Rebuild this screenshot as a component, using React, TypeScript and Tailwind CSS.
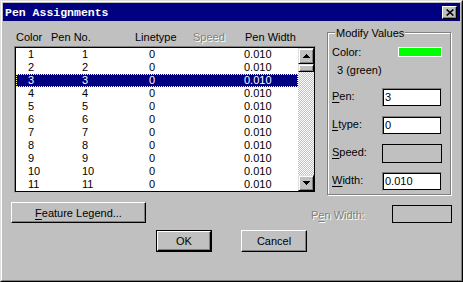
import React from "react";

const Arrow = ({ down }: { down?: boolean }) => (
  <svg width="7" height="4" viewBox="0 0 7 4" className={down ? "rotate-180" : ""}>
    <path d="M3 0h1v1h1v1h1v1h1v1H0V3h1V2h1V1h1z" fill="#000" />
  </svg>
);

const ScrollBtn = ({ down }: { down?: boolean }) => (
  <div className="w-[16px] h-[16px] shrink-0 bg-[#c0c0c0] border border-t-[#dfdfdf] border-l-[#dfdfdf] border-r-black border-b-black shadow-[inset_1px_1px_0_#fff,inset_-1px_-1px_0_#808080] flex items-center justify-center">
    <Arrow down={down} />
  </div>
);

const Field = ({ label, u, rest, value, disabled }: { label: string; u: string; rest: string; value?: string; disabled?: boolean }) => (
  <div className="flex items-start">
    <span className="w-[50px] mt-[2px]">
      <span className="underline underline-offset-2">{u}</span>
      {rest}
    </span>
    {disabled ? (
      <div className="w-[60px] h-[19px] border border-black bg-[#c0c0c0]" />
    ) : (
      <div className="w-[60px] h-[19px] border border-t-[#808080] border-l-[#808080] border-r-[#c0c0c0] border-b-[#c0c0c0]">
        <div className="w-full h-full border border-black bg-white pl-[1px] flex items-center">{value}</div>
      </div>
    )}
  </div>
);

export default function App() {
  const rows = Array.from({ length: 11 }, (_, i) => i + 1);
  return (
    <div className="w-[463px] h-[282px] bg-[#c0c0c0] border border-t-[#dfdfdf] border-l-[#dfdfdf] border-r-black border-b-black text-[11px] leading-[13px] text-black font-['Liberation_Sans',Arial,sans-serif] overflow-hidden">
      <div className="h-full border border-t-white border-l-white border-r-[#808080] border-b-[#808080] p-px flex flex-col">
        {/* Title bar */}
        <div className="h-[18px] shrink-0 bg-[#000080] flex items-center justify-between pl-[2px] pr-[3px]">
          <span className="text-white font-bold font-['Liberation_Mono',monospace] text-[11.5px] leading-[13px]">Pen Assignments</span>
          <div className="w-[15px] h-[13px] bg-[#c0c0c0] border border-t-white border-l-white border-r-black border-b-black shadow-[inset_-1px_-1px_0_#808080] flex items-center justify-center">
            <svg width="8" height="7" viewBox="0 0 8 7">
              <path d="M0.6 0.5L7.4 6.5M7.4 0.5L0.6 6.5" stroke="#000" strokeWidth="1.6" />
            </svg>
          </div>
        </div>

        {/* Top section */}
        <div className="flex items-start mt-[6px]">
          <div className="ml-[8px] w-[305px]">
            <div className="mt-[4px] pl-[5px] flex h-[13px]">
              <span className="w-[35px]">Color</span>
              <span className="w-[84px]">Pen No.</span>
              <span className="w-[58px]">Linetype</span>
              <span className="w-[52px] text-[#808080] [text-shadow:1px_1px_0_#fff]">Speed</span>
              <span>Pen Width</span>
            </div>
            <div className="mt-[2px] ml-[3px] w-[302px] h-[147px] border border-t-[#808080] border-l-[#808080] border-r-[#c0c0c0] border-b-[#c0c0c0]">
              <div className="w-full h-full border border-black flex">
                <div className="w-[282px] bg-white flex flex-col">
                  {rows.map((r) => (
                    <div
                      key={r}
                      className={
                        "h-[13px] flex pl-[12px] " +
                        (r === 3
                          ? "bg-[#000080] text-white outline outline-1 outline-dotted outline-[#ffff80] -outline-offset-1"
                          : "")
                      }
                    >
                      <span className="w-[54px]">{r}</span>
                      <span className="w-[67px]">{r}</span>
                      <span className="w-[95px]">0</span>
                      <span>0.010</span>
                    </div>
                  ))}
                </div>
                <div className="w-[16px] flex flex-col">
                  <ScrollBtn />
                  <div className="w-[16px] h-[8px] shrink-0 bg-[#c0c0c0] border border-t-[#dfdfdf] border-l-[#dfdfdf] border-r-black border-b-black shadow-[inset_1px_1px_0_#fff,inset_-1px_-1px_0_#808080]" />
                  <div className="flex-1 bg-[repeating-conic-gradient(#c0c0c0_0_25%,#fff_0_50%)] bg-[length:2px_2px]" />
                  <ScrollBtn down />
                </div>
              </div>
            </div>
          </div>

          <div className="ml-[11px] relative">
            <span className="absolute top-0 left-[8px] px-[1px] bg-[#c0c0c0] h-[13px]">Modify Values</span>
            <div className="mt-[5px] w-[124px] h-[163px] border border-[#808080] shadow-[inset_1px_1px_0_#fff,1px_1px_0_#fff] pl-[4px] flex flex-col">
              <div className="mt-[13px] flex h-[13px]">
                <span className="w-[66px]">Color:</span>
                <div className="w-[44px] h-[10px] mt-[1px] border border-white bg-[#00ff00]" />
              </div>
              <div className="mt-[5px] pl-[5px] h-[13px]">3 (green)</div>
              <div className="mt-[11px]">
                <Field label="Pen:" u="P" rest="en:" value="3" />
              </div>
              <div className="mt-[9px]">
                <Field label="Ltype:" u="L" rest="type:" value="0" />
              </div>
              <div className="mt-[9px]">
                <Field label="Speed:" u="S" rest="peed:" disabled />
              </div>
              <div className="mt-[9px]">
                <Field label="Width:" u="W" rest="idth:" value="0.010" />
              </div>
            </div>
          </div>
        </div>

        {/* Row 1 */}
        <div className="flex items-start mt-[7px]">
          <button className="ml-[8px] w-[135px] h-[21px] bg-[#c0c0c0] border border-t-white border-l-white border-r-black border-b-black shadow-[inset_-1px_-1px_0_#808080] flex items-center justify-center pt-[1px]">
            <span>
              <span className="underline underline-offset-2">F</span>eature Legend...
            </span>
          </button>
          <span className="ml-[165px] mt-[7px] w-[81px] text-[#808080] [text-shadow:1px_1px_0_#fff]">
            P<span className="underline underline-offset-2">e</span>n Width:
          </span>
          <div className="w-[60px] h-[18px] mt-[3px] border border-black" />
        </div>

        {/* Row 2 */}
        <div className="flex items-start mt-[7px]">
          <button className="ml-[153px] w-[56px] h-[22px] border border-black">
            <div className="w-full h-full border border-t-white border-l-white border-r-black border-b-black shadow-[inset_-1px_-1px_0_#808080] bg-[#c0c0c0] flex items-center justify-center">
              OK
            </div>
          </button>
          <button className="ml-[29px] w-[66px] h-[22px] bg-[#c0c0c0] border border-t-white border-l-white border-r-black border-b-black shadow-[inset_-1px_-1px_0_#808080] flex items-center justify-center">
            Cancel
          </button>
        </div>
      </div>
    </div>
  );
}
